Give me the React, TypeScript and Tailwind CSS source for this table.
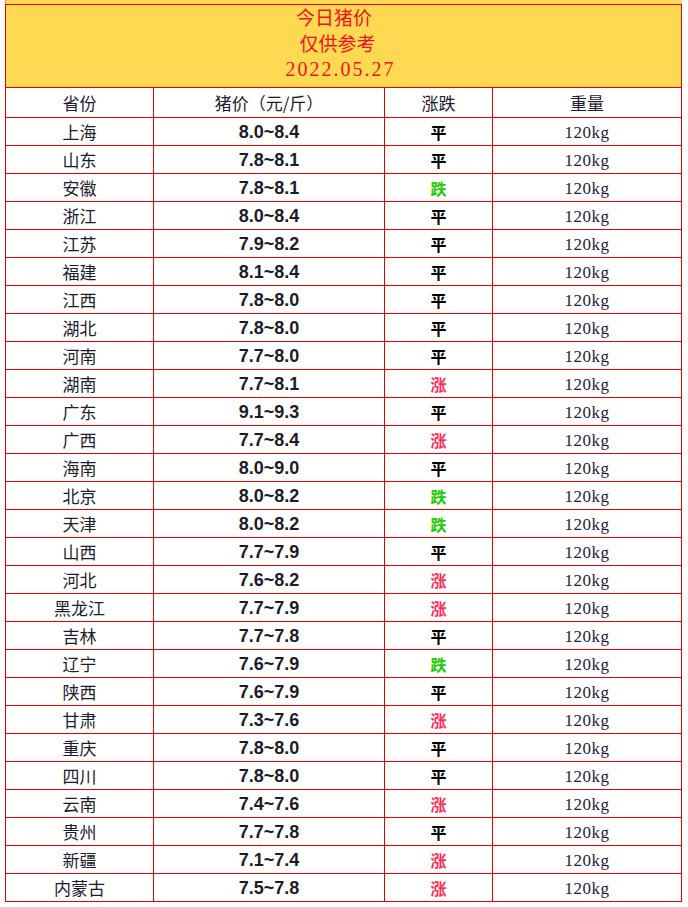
type Trend = '平' | '涨' | '跌'

interface PriceRow {
  province: string
  price: string
  trend: Trend
}

const rows: PriceRow[] = [
  { province: '上海', price: '8.0~8.4', trend: '平' },
  { province: '山东', price: '7.8~8.1', trend: '平' },
  { province: '安徽', price: '7.8~8.1', trend: '跌' },
  { province: '浙江', price: '8.0~8.4', trend: '平' },
  { province: '江苏', price: '7.9~8.2', trend: '平' },
  { province: '福建', price: '8.1~8.4', trend: '平' },
  { province: '江西', price: '7.8~8.0', trend: '平' },
  { province: '湖北', price: '7.8~8.0', trend: '平' },
  { province: '河南', price: '7.7~8.0', trend: '平' },
  { province: '湖南', price: '7.7~8.1', trend: '涨' },
  { province: '广东', price: '9.1~9.3', trend: '平' },
  { province: '广西', price: '7.7~8.4', trend: '涨' },
  { province: '海南', price: '8.0~9.0', trend: '平' },
  { province: '北京', price: '8.0~8.2', trend: '跌' },
  { province: '天津', price: '8.0~8.2', trend: '跌' },
  { province: '山西', price: '7.7~7.9', trend: '平' },
  { province: '河北', price: '7.6~8.2', trend: '涨' },
  { province: '黑龙江', price: '7.7~7.9', trend: '涨' },
  { province: '吉林', price: '7.7~7.8', trend: '平' },
  { province: '辽宁', price: '7.6~7.9', trend: '跌' },
  { province: '陕西', price: '7.6~7.9', trend: '平' },
  { province: '甘肃', price: '7.3~7.6', trend: '涨' },
  { province: '重庆', price: '7.8~8.0', trend: '平' },
  { province: '四川', price: '7.8~8.0', trend: '平' },
  { province: '云南', price: '7.4~7.6', trend: '涨' },
  { province: '贵州', price: '7.7~7.8', trend: '平' },
  { province: '新疆', price: '7.1~7.4', trend: '涨' },
  { province: '内蒙古', price: '7.5~7.8', trend: '涨' },
]

const trendColor: Record<Trend, string> = {
  平: 'text-black',
  涨: 'text-[#ff2d55]',
  跌: 'text-[#1fcc00]',
}

const cjk = "font-['Noto_Sans_CJK_SC',sans-serif]"
const serif = "font-['Liberation_Serif','Noto_Sans_CJK_SC',serif]"

export default function App() {
  return (
    <div className="min-h-[907px] bg-white">
      <div className="ml-[5px] w-[677px]">
        {/* strip of the cell above */}
        <div className="h-[4px] border-l border-r border-l-[#e9a23b] border-r-[#e0d3b0] bg-[#ffd951]" />

        <div className="border-l border-r border-t border-[#e60000]">
          {/* Title */}
          <div className="h-[83px] border-b border-[#e60000] bg-[#ffd951] text-center text-[#f0141e]">
            <div className={`${cjk} h-[24px] pr-[19px] text-[19px] leading-[24px]`}>今日猪价</div>
            <div className={`${cjk} h-[27px] pr-[12px] text-[19px] leading-[27px]`}>仅供参考</div>
            <div className={`${serif} h-[27px] pr-[6px] text-[20px] leading-[27px] tracking-[2px]`}>2022.05.27</div>
          </div>

          {/* Column headers */}
          <div className="grid h-[30px] grid-cols-[148px_231px_108px_188px] border-b border-[#e60000] text-[17px] text-[#1c1c2e]">
            <div className={`${cjk} flex items-center justify-center border-r border-[#e60000]`}>省份</div>
            <div className={`${cjk} flex items-center justify-center border-r border-[#e60000]`}>猪价（元/斤）</div>
            <div className={`${cjk} flex items-center justify-center border-r border-[#e60000]`}>涨跌</div>
            <div className={`${cjk} flex items-center justify-center`}>重量</div>
          </div>

          {/* Rows */}
          {rows.map((row) => (
            <div
              key={row.province}
              className="grid h-[28px] grid-cols-[148px_231px_108px_188px] border-b border-[#e60000]"
            >
              <div className={`${cjk} flex items-center justify-center border-r border-[#e60000] text-[17px] text-[#1c1c2e]`}>
                {row.province}
              </div>
              <div className="flex items-center justify-center border-r border-[#e60000] pt-[1px] font-['Liberation_Sans',Arial,sans-serif] text-[18px] font-bold text-[#1c1c28]">
                {row.price}
              </div>
              <div className={`${cjk} flex items-center justify-center border-r border-[#e60000] text-[16px] font-bold ${trendColor[row.trend]}`}>
                {row.trend}
              </div>
              <div className={`${serif} flex items-center justify-center pt-[2px] text-[17px] tracking-[0.5px] text-[#1c1c3a]`}>
                120kg
              </div>
            </div>
          ))}
        </div>
      </div>
    </div>
  )
}
